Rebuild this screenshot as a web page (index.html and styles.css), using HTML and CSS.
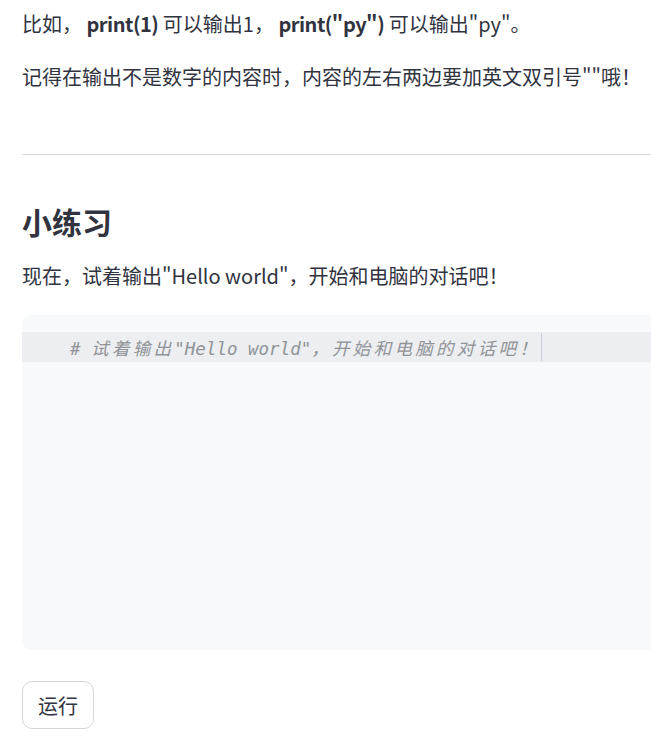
FILE: index.html
```html
<!DOCTYPE html>
<html lang="zh-CN">
<head>
  <meta charset="UTF-8">
  <meta name="viewport" content="width=device-width, initial-scale=1.0">
  <title>小练习</title>
  <link rel="stylesheet" href="styles.css">
</head>
<body>
<div class="main">
  <p>比如， <strong>print(1)</strong> 可以输出1， <strong>print("py")</strong> 可以输出"py"。</p>
  <p>记得在输出不是数字的内容时，内容的左右两边要加英文双引号""哦！</p>

  <hr class="divider">

  <h3>小练习</h3>
  <p class="intro">现在，试着输出"Hello world"，开始和电脑的对话吧！</p>

  <div class="editor">
    <div class="line active">
      <span class="comment"># <span class="cjk">试着输出</span>"Hello world"<span class="cjk">，开始和电脑的对话吧！</span></span><span class="cursor"></span>
    </div>
  </div>

  <button class="run-btn">运行</button>
</div>
</body>
</html>
```

FILE: styles.css
```css
body {
  margin: 0;
  padding: 0;
  overflow: hidden;
  background-color: #ffffff;
  color: #31333f;
  font-family: "Noto Sans CJK SC", "Noto Sans", sans-serif;
  font-size: 20px;
}

.main {
  width: 720px;
  padding: 8px 0 0 22px;
}

p {
  margin: 0 0 21px;
  line-height: 32px;
}

strong {
  font-weight: 700;
  letter-spacing: -0.5px;
}

.divider {
  border: none;
  border-top: 1px solid #d9d9dc;
  margin: 61px 0 0;
}

h3 {
  margin: 48px 0 0;
  font-size: 30px;
  line-height: 36px;
  font-weight: 700;
}

.intro {
  margin: 21px 0 0;
}

.editor {
  margin-top: 23px;
  height: 335px;
  padding-top: 17px;
  box-sizing: border-box;
  background-color: #f8f9fb;
  border-radius: 10px;
}

.line {
  height: 30px;
  display: flex;
  align-items: center;
  padding-left: 48px;
}

.active {
  background-color: #eceef1;
}

.comment {
  font-family: "DejaVu Sans Mono", "Noto Sans CJK SC", monospace;
  font-size: 17.5px;
  font-style: italic;
  color: #909398;
  white-space: pre;
}

.cjk {
  font-family: "Noto Sans CJK SC", sans-serif;
  letter-spacing: 3.3px;
}

.cursor {
  display: inline-block;
  width: 1px;
  height: 28px;
  margin-left: 1px;
  background-color: #c9cedc;
}

.run-btn {
  margin-top: 31px;
  height: 48px;
  padding: 0 15px;
  font-family: inherit;
  font-size: 20px;
  color: #31333f;
  background-color: #ffffff;
  border: 1px solid #d6d6d9;
  border-radius: 10px;
  cursor: pointer;
}
```
